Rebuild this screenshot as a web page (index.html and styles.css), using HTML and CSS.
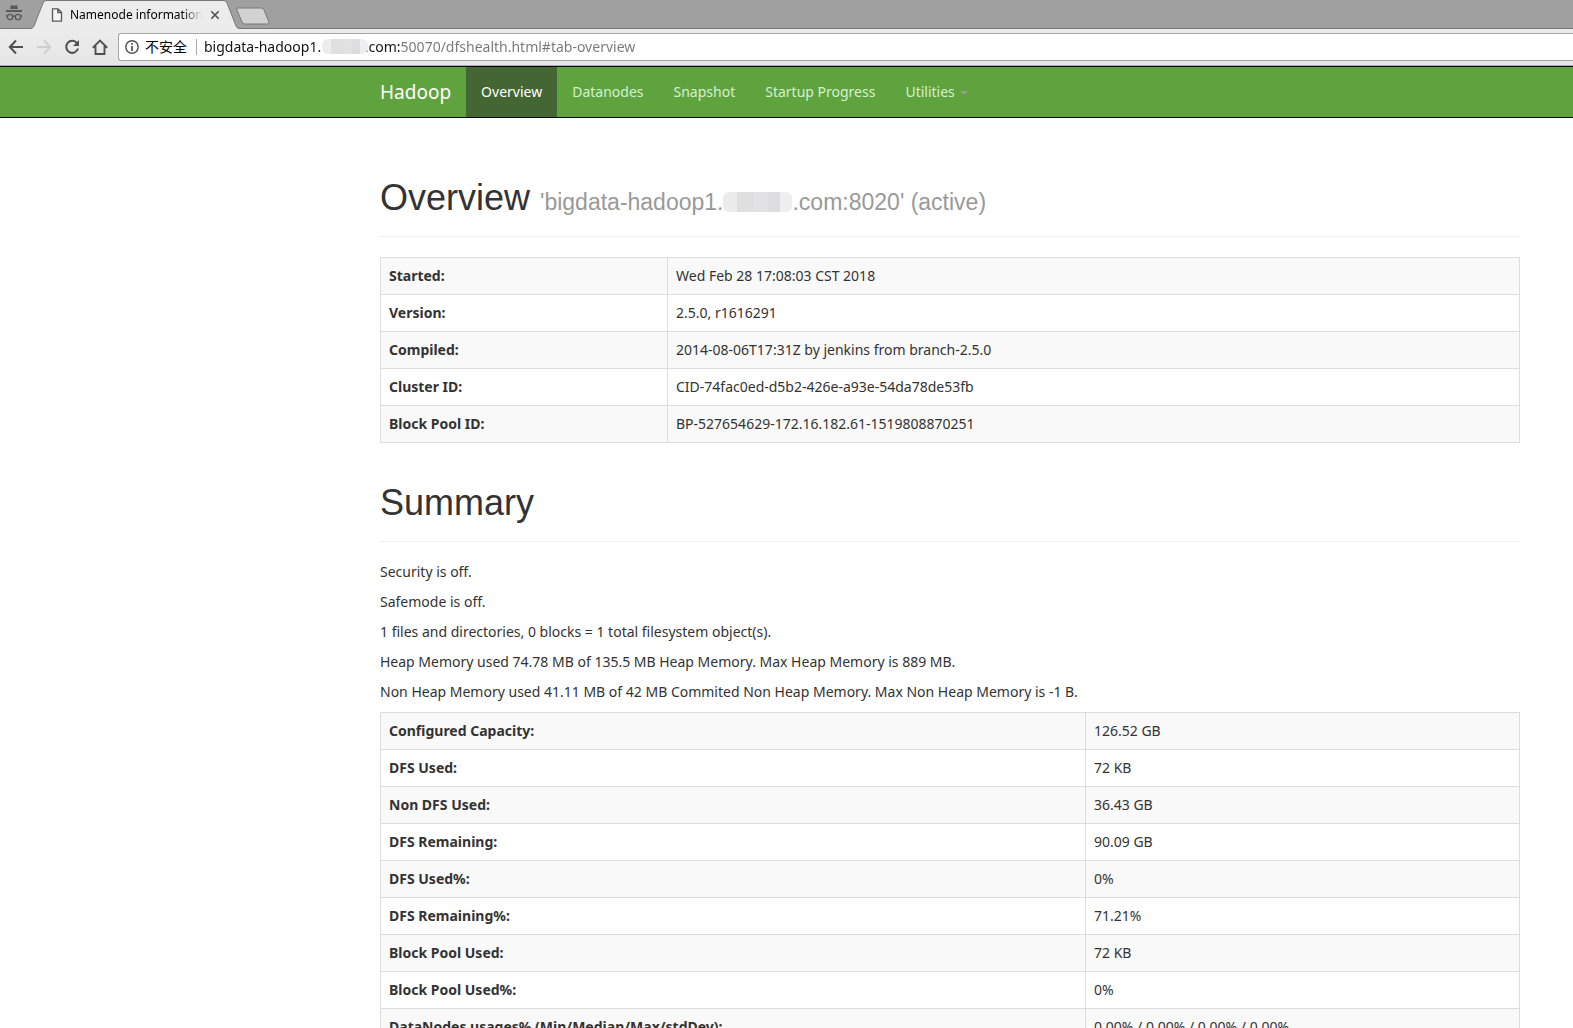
FILE: index.html
```html
<!DOCTYPE html>
<html lang="en">
<head>
<meta charset="utf-8">
<title>Namenode information</title>
<link rel="stylesheet" href="styles.css">
</head>
<body>
<div class="browser">
  <div class="tab-strip">
    <svg class="incognito" width="18" height="18" viewBox="0 0 18 18" aria-hidden="true">
      <path d="M5 5 L6 1 Q9 2 12 1 L13 5Z M1 6H17V8H1Z" fill="#5a5a5a"/>
      <g fill="none" stroke="#5a5a5a" stroke-width="1.3"><circle cx="5" cy="13" r="2.7"/><circle cx="13" cy="13" r="2.7"/><path d="M7.7 12.5Q9 11.5 10.3 12.5M0.8 12h1.5M15.7 12h1.5"/></g>
    </svg>
    <div class="tab">
      <svg class="tab-edge" width="15" height="29" viewBox="0 0 15 29" aria-hidden="true"><path d="M0 29Q2 28 3 26L12 3Q13 .5 15 .5V29Z" fill="#ececec"/><path d="M0 28.5Q2 28 3 26L12 3Q13 .5 15 .5" fill="none" stroke="#777"/></svg>
      <div class="tab-body">
        <svg width="12" height="14" viewBox="0 0 12 14" aria-hidden="true"><path d="M1.5.8H7L10.5 4.3V13.2H1.5ZM6.8.8V4.5H10.5" fill="#f5f5f5" stroke="#5a5a5a" stroke-width="1.3"/></svg>
        <span class="tab-title">Namenode information</span>
        <button class="icon-button" aria-label="Close tab"><svg width="10" height="10" viewBox="0 0 10 10"><path d="M1.3 1.3L8.7 8.7M8.7 1.3L1.3 8.7" stroke="#505050" stroke-width="1.6"/></svg></button>
      </div>
      <svg class="tab-edge" width="15" height="29" viewBox="0 0 15 29" aria-hidden="true"><path d="M15 29Q13 28 12 26L3 3Q2 .5 0 .5V29Z" fill="#ececec"/><path d="M15 28.5Q13 28 12 26L3 3Q2 .5 0 .5" fill="none" stroke="#777"/></svg>
    </div>
    <button class="icon-button new-tab" aria-label="New tab"><svg width="36" height="18" viewBox="0 0 36 18"><path d="M3 1H26Q28 1 29 3L34 15Q34.500 17 32.500 17H10Q8 17 7 15L2 3Q1 1 3 1Z" fill="#d2d2d2" stroke="#777"/></svg></button>
  </div>
  <div class="toolbar">
    <button class="icon-button" aria-label="Back"><svg width="16" height="16" viewBox="0 0 16 16"><path d="M15 8H2M8 1.500L1.800 8L8 14.500" fill="none" stroke="#505050" stroke-width="2"/></svg></button>
    <button class="icon-button" aria-label="Forward" disabled><svg width="16" height="16" viewBox="0 0 16 16"><path d="M1 8H14M8 1.500L14.200 8L8 14.500" fill="none" stroke="#cfcfcf" stroke-width="2"/></svg></button>
    <button class="icon-button" aria-label="Reload"><svg width="16" height="16" viewBox="0 0 16 16"><path d="M13 4.200A6 6 0 1 0 14 9.500" fill="none" stroke="#505050" stroke-width="2"/><path d="M15 1V7H9Z" fill="#505050"/></svg></button>
    <button class="icon-button" aria-label="Home"><svg width="16" height="16" viewBox="0 0 16 16"><path d="M.8 8.700L8 1.600L15.200 8.700M3.500 7V15H12.500V7" fill="none" stroke="#505050" stroke-width="1.900"/></svg></button>
    <div class="address">
      <svg width="14" height="14" viewBox="0 0 14 14" aria-hidden="true"><circle cx="7" cy="7" r="6.200" fill="none" stroke="#505050" stroke-width="1.400"/><path d="M7 6V11M7 3V4.700" stroke="#505050" stroke-width="1.700"/></svg>
      <span class="security" lang="zh">不安全</span>
      <input class="url" type="text" aria-label="Address" value="bigdata-hadoop1.            .com:50070/dfshealth.html#tab-overview">
      <span class="mosaic mosaic-url"></span>
    </div>
  </div>
</div>

<nav class="navbar">
  <a class="brand" href="#">Hadoop</a>
  <a class="nav-link active" href="#tab-overview">Overview</a>
  <a class="nav-link" href="#tab-datanode">Datanodes</a>
  <a class="nav-link" href="#tab-snapshot">Snapshot</a>
  <a class="nav-link" href="#tab-startup-progress">Startup Progress</a>
  <a class="nav-link" href="#">Utilities <span class="caret"></span></a>
</nav>

<main class="container">
  <header class="page-header"><h1>Overview <small>'bigdata-hadoop1.<span class="mosaic mosaic-host"></span>.com:8020' (active)</small></h1></header>
  <table class="info">
    <tr><th scope="row">Started:</th><td>Wed Feb 28 17:08:03 CST 2018</td></tr>
    <tr><th scope="row">Version:</th><td>2.5.0, r1616291</td></tr>
    <tr><th scope="row">Compiled:</th><td>2014-08-06T17:31Z by jenkins from branch-2.5.0</td></tr>
    <tr><th scope="row">Cluster ID:</th><td>CID-74fac0ed-d5b2-426e-a93e-54da78de53fb</td></tr>
    <tr><th scope="row">Block Pool ID:</th><td>BP-527654629-172.16.182.61-1519808870251</td></tr>
  </table>
  <header class="page-header"><h1>Summary</h1></header>
  <p>Security is off.</p>
  <p>Safemode is off.</p>
  <p>1 files and directories, 0 blocks = 1 total filesystem object(s).</p>
  <p>Heap Memory used 74.78 MB of 135.5 MB Heap Memory. Max Heap Memory is 889 MB.</p>
  <p>Non Heap Memory used 41.11 MB of 42 MB Commited Non Heap Memory. Max Non Heap Memory is -1 B.</p>
  <table class="info stats">
    <tr><th scope="row">Configured Capacity:</th><td>126.52 GB</td></tr>
    <tr><th scope="row">DFS Used:</th><td>72 KB</td></tr>
    <tr><th scope="row">Non DFS Used:</th><td>36.43 GB</td></tr>
    <tr><th scope="row">DFS Remaining:</th><td>90.09 GB</td></tr>
    <tr><th scope="row">DFS Used%:</th><td>0%</td></tr>
    <tr><th scope="row">DFS Remaining%:</th><td>71.21%</td></tr>
    <tr><th scope="row">Block Pool Used:</th><td>72 KB</td></tr>
    <tr><th scope="row">Block Pool Used%:</th><td>0%</td></tr>
    <tr><th scope="row">DataNodes usages% (Min/Median/Max/stdDev):</th><td>0.00% / 0.00% / 0.00% / 0.00%</td></tr>
  </table>
</main>
</body>
</html>
```
FILE: styles.css
```css
* { box-sizing: border-box; }
html { overflow: hidden; }
body {
  margin: 0;
  height: 100vh;
  overflow: hidden;
  background: #fff;
  color: #333;
  font: 14px/20px "Noto Sans", "Noto Sans CJK SC", sans-serif;
}
svg { display: block; flex: none; }

.icon-button { display: block; padding: 0; border: 0; background: none; }

.tab-strip {
  display: flex;
  align-items: flex-start;
  height: 29px;
  background: #a0a0a0;
  box-shadow: inset 0 -1px #777;
}
.incognito { margin: 4px 8px 0 5px; }
.tab { display: flex; }
.tab-body {
  display: flex;
  align-items: center;
  width: 178px;
  height: 29px;
  padding-left: 5px;
  border-top: 1px solid #777;
  background: #ececec;
}
.tab-title {
  width: 132px;
  margin: 0 8px 0 7px;
  overflow: hidden;
  white-space: nowrap;
  font-size: 12px;
  color: #000;
  -webkit-mask-image: linear-gradient(to right, #000 112px, transparent);
  mask-image: linear-gradient(to right, #000 112px, transparent);
}
.new-tab { margin: 7px 0 0 -4px; }

.toolbar {
  display: flex;
  align-items: center;
  gap: 12px;
  height: 37px;
  padding-left: 8px;
  background: linear-gradient(#ececec, #e6e6e6);
  border-bottom: 1px solid #aaa;
}
.address {
  position: relative;
  display: flex;
  flex: 1;
  align-items: center;
  height: 28px;
  margin-left: -2px;
  padding-left: 6px;
  border: 1px solid #a5a5a5;
  border-right: 0;
  border-radius: 3px 0 0 3px;
  background: #fff;
}
.security {
  margin-left: 6px;
  padding-right: 9px;
  border-right: 1px solid #aaa;
  color: #000;
  line-height: 16px;
}
.url {
  flex: 1;
  min-width: 0;
  padding: 0 0 0 7px;
  border: 0;
  font: inherit;
  color: transparent;
  background: linear-gradient(to right, #111 203px, #777 203px);
  -webkit-background-clip: text;
  background-clip: text;
}
.mosaic {
  border-radius: 6px;
  background: linear-gradient(to right, #ececec 20%, #dfdfdf 20% 45%, #e2e2e4 45% 65%, #dcdde0 65% 82%, #eee 82%);
}
.mosaic-url { position: absolute; left: 203px; top: 5px; width: 46px; height: 15px; }
.mosaic-host { display: inline-block; width: 69px; height: 20px; vertical-align: -2px; }

.navbar {
  display: flex;
  height: 52px;
  padding-left: 365px;
  border: 1px solid #080808;
  border-width: 1px 0;
  background: #5fa33e;
}
.brand, .nav-link {
  padding: 15px;
  color: #d5f0d0;
  text-decoration: none;
}
.brand { font-size: 19px; color: #fff; }
.nav-link.active { background: #446633; color: #fff; }
.caret {
  display: inline-block;
  margin-left: 2px;
  vertical-align: middle;
  border: 4px solid transparent;
  border-top-color: #999;
  border-bottom: 0;
}

.container { padding: 20px 53px 0 380px; }
.page-header {
  margin: 40px 0 20px;
  padding-bottom: 8px;
  border-bottom: 1px solid #eee;
}
h1 {
  margin: 0 0 10px;
  font: 36px/40px "Liberation Sans", Arial, sans-serif;
}
h1 small { font-size: 23px; line-height: 24px; color: #999; }
p { margin: 0 0 10px; }

.info { width: 100%; border-collapse: collapse; }
.info th, .info td {
  padding: 8px;
  border: 1px solid #ddd;
  text-align: left;
}
.info th { width: 287px; }
.stats th { width: 705px; }
.info tr:nth-child(odd) { background: #f9f9f9; }
```
